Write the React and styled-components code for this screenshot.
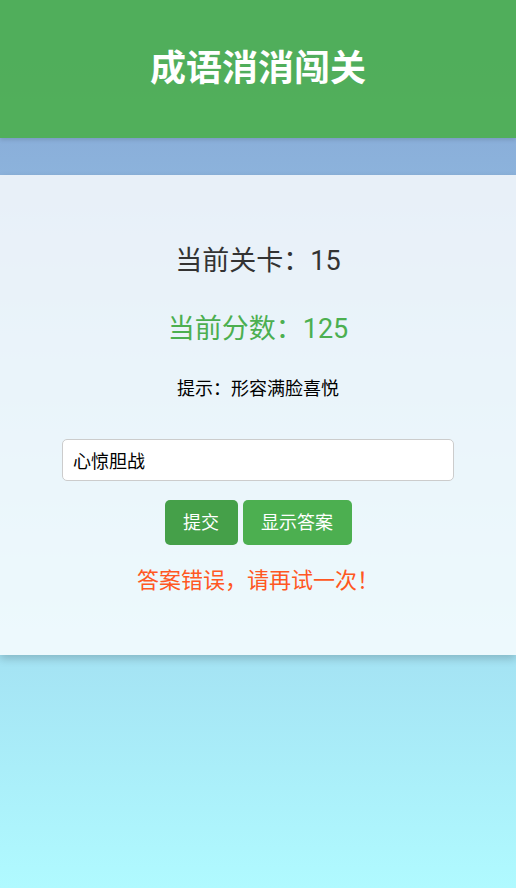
import React, { useState } from "react";
import styled, { createGlobalStyle } from "styled-components";

const GlobalStyle = createGlobalStyle`
  html, body {
    margin: 0;
    padding: 0;
    min-height: 100%;
  }
  body {
    min-height: 888px;
    font-family: Roboto, "Noto Sans CJK SC", sans-serif;
    background: linear-gradient(to bottom, #83a1d3 0%, #b0faff 100%);
    background-attachment: fixed;
  }
`;

const Page = styled.div`
  min-height: 888px;
  display: flex;
  flex-direction: column;
`;

const Header = styled.header`
  background: rgba(76, 175, 80, 0.92);
  padding: 40px 0;
  text-align: center;
  box-shadow: 0 2px 4px rgba(0, 0, 0, 0.12);
`;

const Title = styled.h1`
  margin: 0;
  font-size: 36px;
  line-height: 58px;
  font-weight: 700;
  color: #ffffff;
`;

const Card = styled.main`
  margin-top: 37px;
  background: rgba(255, 255, 255, 0.8);
  box-shadow: 0 4px 8px rgba(0, 0, 0, 0.18);
  padding: 68px 0 59px;
  display: flex;
  flex-direction: column;
  align-items: center;
`;

const Stat = styled.p`
  margin: 0 0 ${(p) => p.$gap}px;
  font-size: 27px;
  line-height: 36px;
  color: ${(p) => p.$color};
`;

const Hint = styled.p`
  margin: 0 0 37px;
  font-size: 18px;
  line-height: 26px;
  color: #000;
`;

const Input = styled.input`
  box-sizing: border-box;
  width: 392px;
  height: 42px;
  padding: 0 10px;
  border: 1px solid #cccccc;
  border-radius: 5px;
  background: #ffffff;
  font-family: Roboto, "Noto Sans CJK SC", sans-serif;
  font-size: 18px;
  color: #000;
  outline: none;
  margin-bottom: 19px;
`;

const Buttons = styled.div`
  display: flex;
  gap: 5px;
  margin-bottom: 21px;
`;

const Button = styled.button`
  font-family: Roboto, "Noto Sans CJK SC", sans-serif;
  font-size: 18px;
  line-height: 25px;
  padding: 10px 18.5px;
  border: none;
  border-radius: 5px;
  color: #ffffff;
  background: ${(p) => (p.$active ? "#45a049" : "#4caf50")};
  cursor: pointer;
`;

const Message = styled.p`
  margin: 0;
  font-size: 22px;
  line-height: 30px;
  color: #ff5722;
`;

export default function App() {
  const [value, setValue] = useState("心惊胆战");
  return (
    <>
      <GlobalStyle />
      <Page>
        <Header>
          <Title>成语消消闯关</Title>
        </Header>
        <Card>
          <Stat $color="#333333" $gap={32}>当前关卡：15</Stat>
          <Stat $color="#4caf50" $gap={29}>当前分数：125</Stat>
          <Hint>提示：形容满脸喜悦</Hint>
          <Input value={value} onChange={(e) => setValue(e.target.value)} />
          <Buttons>
            <Button $active>提交</Button>
            <Button>显示答案</Button>
          </Buttons>
          <Message>答案错误，请再试一次！</Message>
        </Card>
      </Page>
    </>
  );
}
